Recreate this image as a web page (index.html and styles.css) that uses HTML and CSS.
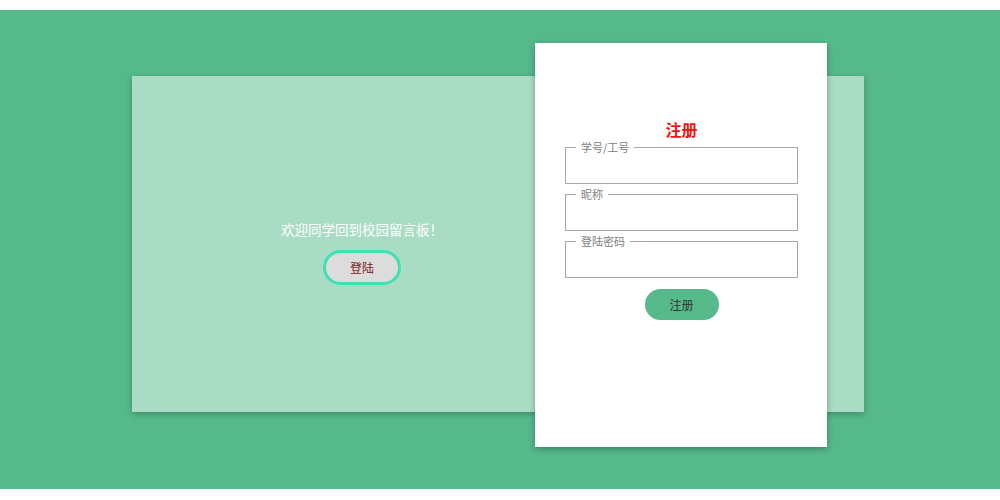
FILE: index.html
```html
<!DOCTYPE html>
<html lang="zh">
<head>
<meta charset="utf-8">
<title>校园留言板</title>
<link rel="stylesheet" href="styles.css">
</head>
<body>
<div class="top-strip"></div>
<main class="scene">
  <div class="stage">
    <section class="panel">
      <div class="welcome">
        <p class="welcome-text">欢迎同学回到校园留言板！</p>
        <button class="btn-login" type="button">登陆</button>
      </div>
    </section>
    <section class="card">
      <h2 class="card-title">注册</h2>
      <form class="form">
        <fieldset class="field">
          <legend class="field-label">学号/工号</legend>
          <input class="field-input" type="text">
        </fieldset>
        <fieldset class="field">
          <legend class="field-label">昵称</legend>
          <input class="field-input" type="text">
        </fieldset>
        <fieldset class="field">
          <legend class="field-label">登陆密码</legend>
          <input class="field-input" type="password">
        </fieldset>
        <button class="btn-register" type="button">注册</button>
      </form>
    </section>
  </div>
</main>
</body>
</html>
```

FILE: styles.css
```css
* { box-sizing: border-box; }
html, body { margin: 0; padding: 0; background: #ffffff; }
body {
  font-family: "Noto Sans CJK SC", "Noto Sans", sans-serif;
  width: 1000px;
  height: 500px;
  overflow: hidden;
}
.top-strip { height: 10px; background: #ffffff; }
.scene {
  height: 479px;
  background: #55b98a;
  padding-top: 33px;
}
.stage {
  position: relative;
  width: 732px;
  height: 404px;
  margin-left: 132px;
  padding-top: 33px;
}
.panel {
  height: 336px;
  background: #a8dcc4;
  box-shadow: 0 2px 6px rgba(0,0,0,0.25);
  display: flex;
}
.welcome {
  width: 460px;
  display: flex;
  flex-direction: column;
  align-items: center;
  justify-content: center;
  padding-top: 16px;
}
.welcome-text {
  margin: 0 0 12px;
  color: #ffffff;
  font-size: 13.5px;
  line-height: 18px;
}
.btn-login {
  width: 78px;
  height: 35px;
  border: 3px solid #3fe0b1;
  border-radius: 18px;
  background: #dcdcdc;
  color: #7a1a1a;
  font-family: inherit;
  font-size: 12px;
  padding: 0;
}
.card {
  position: absolute;
  left: 403px;
  top: 0;
  width: 292px;
  height: 404px;
  background: #ffffff;
  box-shadow: 0 2px 6px rgba(0,0,0,0.3);
  padding: 76px 29px 0 30px;
}
.card-title {
  margin: 0 0 2px;
  text-align: center;
  color: #ee1111;
  font-size: 16px;
  line-height: 20px;
  font-weight: bold;
}
.form {
  display: flex;
  flex-direction: column;
  gap: 4px;
}
.field {
  margin: 0;
  padding: 0 6px;
  height: 43px;
  border: 1.5px solid #a8a8a8;
}
.field-label {
  margin-left: 4px;
  padding: 0 5px;
  color: #808080;
  font-size: 11px;
  line-height: 12px;
}
.field-input {
  display: block;
  width: 100%;
  height: 28px;
  border: none;
  outline: none;
  background: transparent;
}
.btn-register {
  align-self: center;
  margin-top: 7px;
  width: 74px;
  height: 31px;
  border: none;
  border-radius: 16px;
  background: #55b98a;
  color: #333333;
  font-family: inherit;
  font-size: 12px;
  padding: 0;
}
```
